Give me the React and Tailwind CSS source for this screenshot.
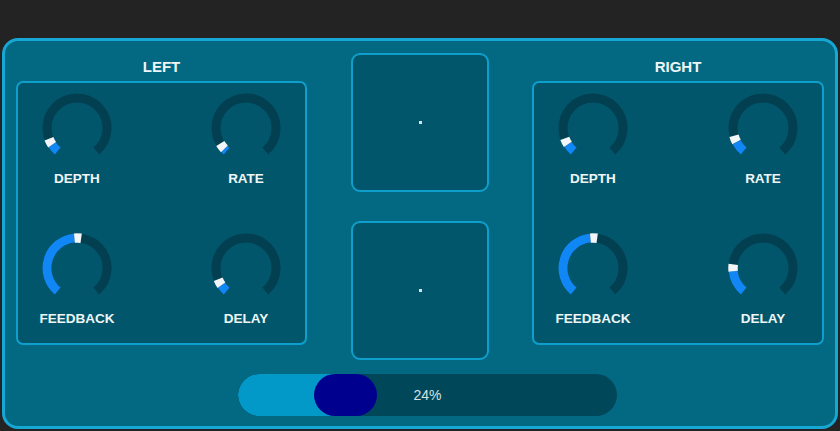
import React from 'react';

const pt = (deg, r = 30) => {
  const a = (deg * Math.PI) / 180;
  return [38 + r * Math.sin(a), 38 - r * Math.cos(a)];
};

const arc = (from, to) => {
  const [x1, y1] = pt(from);
  const [x2, y2] = pt(to);
  const large = to - from > 180 ? 1 : 0;
  return `M ${x1} ${y1} A 30 30 0 ${large} 1 ${x2} ${y2}`;
};

const Knob = ({ label, angle }) => (
  <div className="flex flex-col items-center">
    <svg width="76" height="76" viewBox="0 0 76 76">
      <path d={arc(-140, 140)} fill="none" stroke="#023f50" strokeWidth="9" />
      <path d={arc(-140, angle)} fill="none" stroke="#1186f5" strokeWidth="9" />
      <path d={arc(angle, angle + 13)} fill="none" stroke="#f2f6f8" strokeWidth="9.5" />
    </svg>
    <span className="mt-[5px] text-[13.5px] leading-4 font-bold text-[#eef6f8] whitespace-nowrap">{label}</span>
  </div>
);

const Channel = ({ title, knobs }) => (
  <div className="flex w-[292px] flex-col">
    <div className="flex h-[28px] items-center justify-center text-[15px] font-bold text-[#eef6f8]">{title}</div>
    <div className="grid h-[264px] grid-cols-[76px_76px] content-start justify-between gap-y-[43px] rounded-[7px] border-2 border-[#0e9fcc] bg-[#02566b] px-[21px] pt-[7px]">
      {knobs.map((k) => (
        <Knob key={k.label} label={k.label} angle={k.angle} />
      ))}
    </div>
  </div>
);

const Pad = () => (
  <div className="flex h-[139px] w-[138px] items-center justify-center rounded-[9px] border-2 border-[#0e9fcc] bg-[#02566b]">
    <div className="h-[3px] w-[3px] bg-[#cfe6ee]" />
  </div>
);

export default function App() {
  const left = [
    { label: 'DEPTH', angle: -124 },
    { label: 'RATE', angle: -134 },
    { label: 'FEEDBACK', angle: -5 },
    { label: 'DELAY', angle: -125 },
  ];
  const right = [
    { label: 'DEPTH', angle: -123 },
    { label: 'RATE', angle: -118 },
    { label: 'FEEDBACK', angle: -5 },
    { label: 'DELAY', angle: -96 },
  ];

  return (
    <div className="h-[431px] w-[840px] bg-[#232323] px-[2px] pt-[38px] pb-[2px] font-['Liberation_Sans',Arial,sans-serif]">
      <div className="h-full rounded-[16px] border-[3px] border-[#17a7d4] bg-[#036882] px-[11px] pt-[12px]">
        <div className="flex">
          <Channel title="LEFT" knobs={left} />
          <div className="ml-[44px] flex flex-col gap-[29px]">
            <Pad />
            <Pad />
          </div>
          <div className="ml-[43px]">
            <Channel title="RIGHT" knobs={right} />
          </div>
        </div>
        <div className="relative mt-[14px] ml-[222px] h-[42px] w-[379px] overflow-hidden rounded-full bg-[#00475a]">
          <div className="absolute inset-y-0 left-0 w-[108px] rounded-l-full bg-[#0299c8]" />
          <div className="absolute inset-y-0 left-[76px] w-[63px] rounded-full bg-[#00008f]" />
          <div className="relative flex h-full items-center justify-center text-[14px] font-medium text-[#d3e2e7]">24%</div>
        </div>
      </div>
    </div>
  );
}
